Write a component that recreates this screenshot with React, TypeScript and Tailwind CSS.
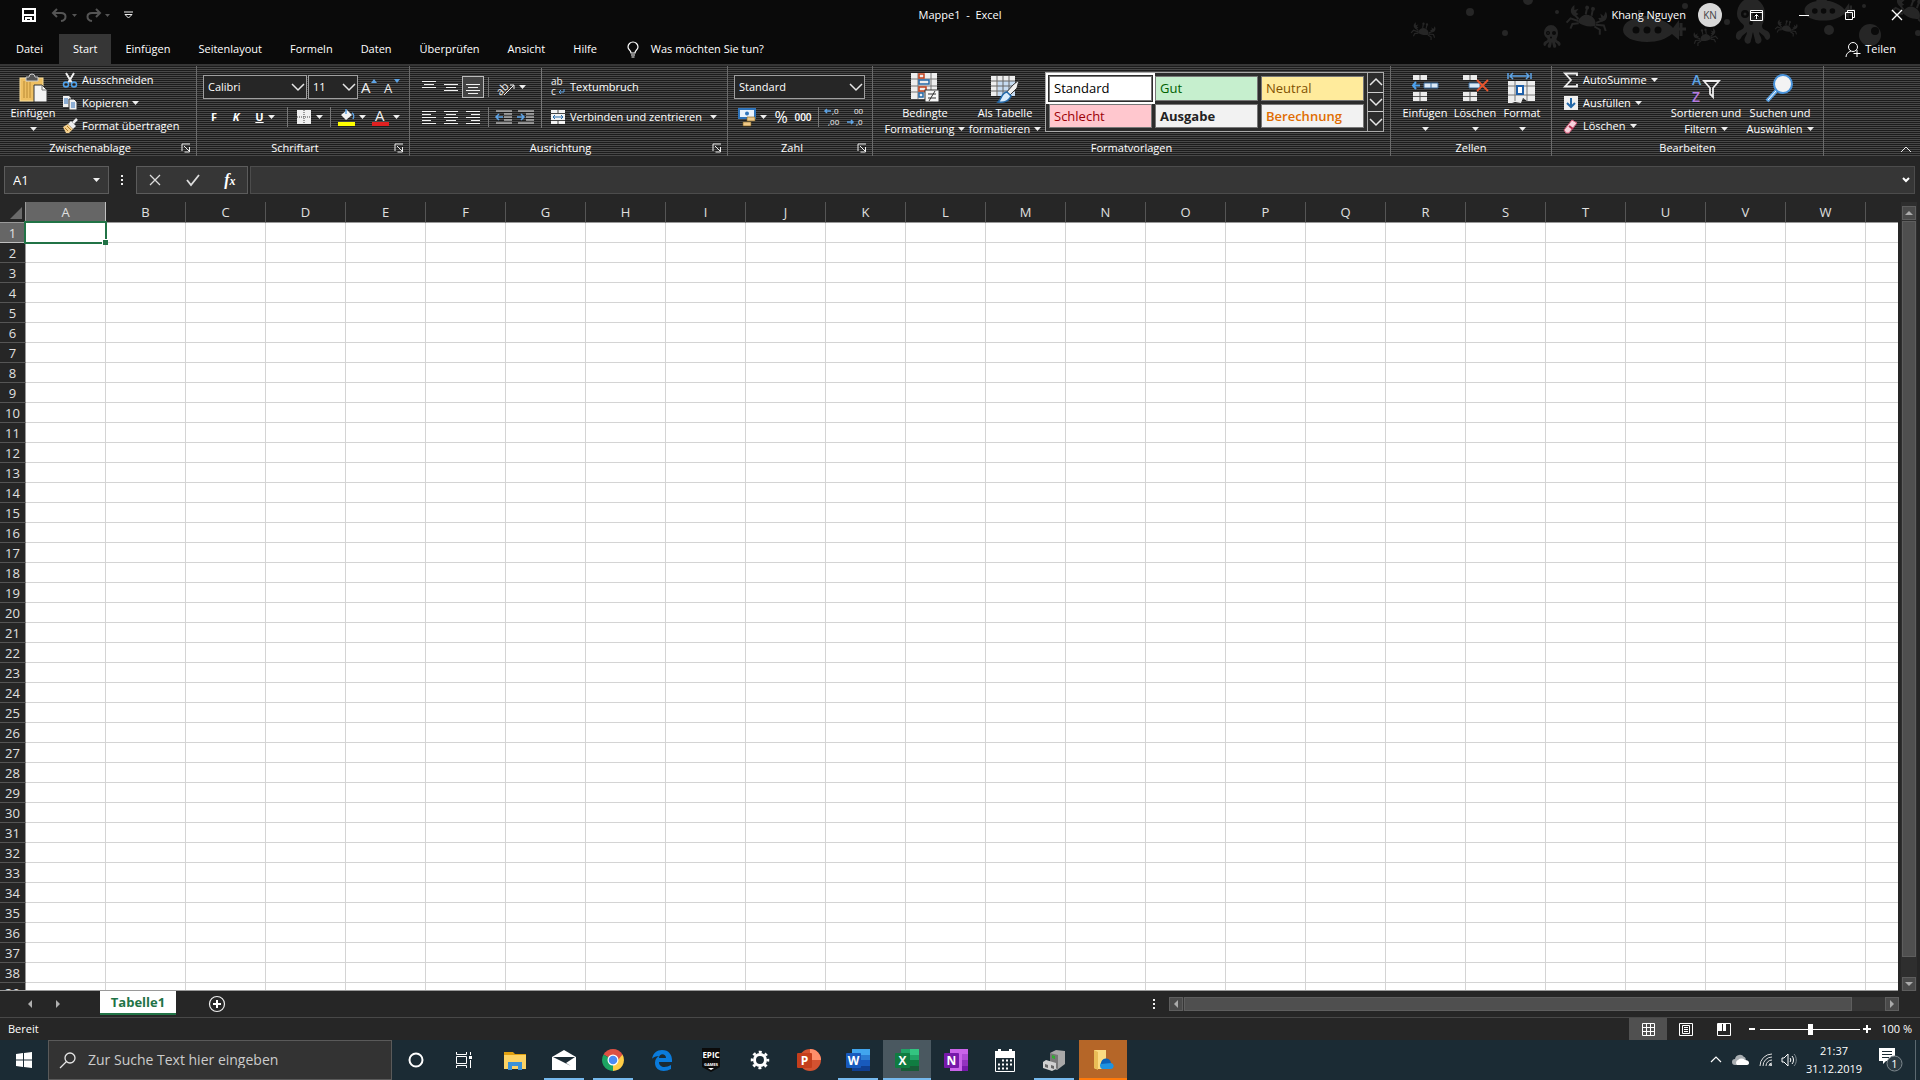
import type { ReactNode } from "react"
import { clsx } from "clsx"

const columns = [..."ABCDEFGHIJKLMNOPQRSTUVW".split(""), ""]
const rows = Array.from({ length: 39 }, (_, i) => i + 1)
const tabs = ["Datei", "Start", "Einfügen", "Seitenlayout", "Formeln", "Daten", "Überprüfen", "Ansicht", "Hilfe"]

const cellStyles = [
  { name: "Standard", className: "bg-white text-black outline-2 outline-offset-1 outline-white" },
  { name: "Gut", className: "bg-[#c6efce] text-[#006100]" },
  { name: "Neutral", className: "bg-[#ffeb9c] text-[#7f5000]" },
  { name: "Schlecht", className: "bg-[#ffc7ce] text-[#9c0006]" },
  { name: "Ausgabe", className: "bg-[#f2f2f2] text-[#222222] font-bold" },
  { name: "Berechnung", className: "bg-[#f2f2f2] text-[#e06c00] font-semibold" },
]

function Svg({ w = 16, h = 16, children }: { w?: number; h?: number; children: ReactNode }) {
  return (
    <svg width={w} height={h} viewBox={`0 0 ${w} ${h}`} fill="none" className="shrink-0 overflow-visible" aria-hidden="true">
      {children}
    </svg>
  )
}

function Caret() {
  return (
    <Svg w={7} h={4}>
      <path d="M0 0h7L3.500 4z" fill="#f0f0f0" />
    </Svg>
  )
}

function Chevron({ up }: { up?: boolean }) {
  return (
    <Svg w={16} h={10}>
      <path d={up ? "M2 8l6-6 6 6" : "M2 2l6 6 6-6"} stroke="#e6e6e6" strokeWidth="1.500" />
    </Svg>
  )
}

function Group({ label, launcher, className, children }: { label: string; launcher?: boolean; className?: string; children: ReactNode }) {
  return (
    <section className={clsx("flex shrink-0 flex-col border-r border-[#6a6a6a] pt-0.5", className)}>
      <div className="flex flex-1 items-start">{children}</div>
      <div className="flex h-4 items-center">
        <span className="flex-1 text-center">{label}</span>
        {launcher && (
          <button aria-label={`${label} – weitere Optionen`} className="mr-1">
            <Svg w={12} h={12}>
              <path d="M2 9V2h8M4 4l5 5M9.500 5v5h-5" stroke="#eee" />
            </Svg>
          </button>
        )}
      </div>
    </section>
  )
}

function LargeButton({ icon, lines, className }: { icon: ReactNode; lines: string[]; className?: string }) {
  return (
    <button className={clsx("flex shrink-0 flex-col items-center pt-1", className)}>
      <span className="flex h-8 items-center">{icon}</span>
      <span className="h-4 leading-[18px] whitespace-nowrap">{lines[0]}</span>
      <span className="flex h-[18px] items-center gap-1 whitespace-nowrap">
        {lines[1]}
        <Caret />
      </span>
    </button>
  )
}

function SmallButton({ icon, label, caret }: { icon: ReactNode; label: string; caret?: boolean }) {
  return (
    <button className="flex h-[23px] items-center gap-1 whitespace-nowrap">
      {icon}
      {label}
      {caret && <Caret />}
    </button>
  )
}

function Tool({ label, className, children }: { label: string; className?: string; children: ReactNode }) {
  return (
    <button aria-label={label} className={clsx("flex h-[22px] shrink-0 items-center justify-center gap-1", className ?? "w-[22px]")}>
      {children}
    </button>
  )
}

function Divider() {
  return <span className="mx-1 h-5 w-px shrink-0 bg-[#777777]" />
}

function Combo({ label, value, className }: { label: string; value: string; className: string }) {
  return (
    <div className={clsx("grid h-6 shrink-0 items-center border border-[#a0a0a0] bg-[#262626]", className)}>
      <select aria-label={label} className="col-start-1 row-start-1 w-full appearance-none px-1 text-[11px] outline-none">
        <option>{value}</option>
      </select>
      <span className="pointer-events-none col-start-1 row-start-1 justify-self-end">
        <Chevron />
      </span>
    </div>
  )
}

// horizontal strokes of a paragraph icon, one x/width pair per line
function Lines({ items }: { items: [number, number][] }) {
  return (
    <Svg>
      {items.map(([x, w], i) => (
        <rect key={i} x={x} y={2 + i * 3} width={w} height="1" fill="#f2f2f2" />
      ))}
    </Svg>
  )
}

function FontLetter({ arrow }: { arrow: "up" | "down" }) {
  return (
    <Svg w={20} h={20}>
      <text x="1" y="16" fontSize={arrow === "up" ? 15 : 13} fill="#f2f2f2">A</text>
      {arrow === "up" ? <path d="M11 6l3-4 3 4z" fill="#5ea4e6" /> : <path d="M11 2l3 4 3-4z" fill="#5ea4e6" />}
    </Svg>
  )
}

function Indent({ right }: { right?: boolean }) {
  return (
    <Svg w={18}>
      <path d="M1 2h16M9 5h8M9 8h8M9 11h8M1 14h16" stroke="#f2f2f2" />
      <path d={right ? "M0 8h6M4 5l3 3-3 3" : "M8 8H1M4 5L1 8l3 3"} stroke="#5ea4e6" strokeWidth="1.500" />
    </Svg>
  )
}

function Decimals({ more }: { more?: boolean }) {
  return (
    <Svg w={20} h={20}>
      <text x="8" y="7" fontSize="8" fill="#f2f2f2">{more ? ",0" : "00"}</text>
      <text x={more ? 4 : 10} y="18" fontSize="8" fill="#f2f2f2">{more ? ",00" : ",0"}</text>
      <path d={more ? "M7 4H1M3 2L1 4l2 2" : "M1 15h6M5 13l2 2-2 2"} stroke="#5ea4e6" strokeWidth="1.500" />
    </Svg>
  )
}

function CellRows({ kind }: { kind: "insert" | "delete" }) {
  return (
    <Svg w={28} h={30}>
      <path d="M2 2h14v5H2zM2 19h14v9H2z" fill="#ececec" />
      <path d="M9 2v5M9 19v9M2 23.500h14" stroke="#555" />
      {kind === "insert" ? (
        <>
          <path d="M13 10h14v5H13z" fill="#dceaf7" stroke="#3f6f9f" />
          <path d="M20 10v5" stroke="#3f6f9f" />
          <path d="M9 12.500H2M5 9l-3 3.500L5 16" stroke="#4ea3ef" strokeWidth="2" />
        </>
      ) : (
        <>
          <path d="M8 10h11v5H8z" fill="#dceaf7" stroke="#3f6f9f" />
          <path d="M16 7l11 11M27 7L16 18" stroke="#e8552d" strokeWidth="1.800" />
        </>
      )}
    </Svg>
  )
}

const icons = {
  paste: (
    <Svg w={30} h={30}>
      <rect x="2" y="5" width="23" height="23" fill="#eebf62" stroke="#f7dc98" />
      <path d="M6 8v17M9 9v16M12 9v16" stroke="#b98a34" />
      <path d="M8 8V4h3a3 3 0 016 0h3v4z" fill="#555" stroke="#ccc" />
      <path d="M16 12h8l5 5v12H16z" fill="#f4f4f4" stroke="#333" />
      <path d="M24 12v5h5" stroke="#777" />
    </Svg>
  ),
  cut: (
    <Svg>
      <path d="M4 1l6 10M12 1L6 11" stroke="#f0f0f0" strokeWidth="2" />
      <circle cx="4" cy="12.500" r="2.500" stroke="#4ea3ef" strokeWidth="1.500" />
      <circle cx="12" cy="12.500" r="2.500" stroke="#4ea3ef" strokeWidth="1.500" />
    </Svg>
  ),
  copy: (
    <Svg>
      <path d="M1 1h6l2 2v9H1z" fill="#f0f0f0" />
      <path d="M2 4h4M2 6h4M2 8h4" stroke="#2b6cb8" />
      <path d="M7 4h5l3 3v8H7z" fill="#f0f0f0" stroke="#333" />
      <path d="M9 8h4M9 10h4M9 12h4" stroke="#2b6cb8" />
    </Svg>
  ),
  brush: (
    <Svg>
      <path d="M1 9l5-3 5 5-4 4H4z" fill="#f3cf8e" />
      <path d="M6 6l3-3 5 5-3 3z" fill="#eee" />
      <path d="M11 5l4-4" stroke="#eee" strokeWidth="2.500" />
      <path d="M3 10l3 3M5 8l4 4" stroke="#b07b22" />
    </Svg>
  ),
  conditional: (
    <Svg w={30} h={32}>
      <rect x="1" y="1" width="26" height="26" fill="#eee" />
      <path d="M1 7h26M1 14h26M1 20h26M8 1v26M21 1v26" stroke="#777" />
      <rect x="9" y="2" width="5" height="4" stroke="#c4401c" strokeWidth="1.500" />
      <rect x="9" y="8" width="10" height="4" stroke="#2368a8" strokeWidth="1.500" />
      <rect x="9" y="15" width="7" height="4" stroke="#c4401c" strokeWidth="1.500" />
      <rect x="9" y="21" width="4" height="4" stroke="#2368a8" strokeWidth="1.500" />
      <rect x="15" y="18" width="14" height="12" fill="#f6f6f6" stroke="#333" />
      <path d="M18 22h8M18 26h8M25 19l-6 10" stroke="#333" />
    </Svg>
  ),
  table: (
    <Svg w={30} h={30}>
      <rect x="1" y="3" width="24" height="20" fill="#eee" />
      <path d="M8 8h17v15H8z" fill="#c7dcf2" />
      <path d="M1 8h24M1 13h24M1 18h24M7 3v20M13 3v20M19 3v20" stroke="#666" />
      <path d="M29 7l-2 8-9 9-3-3 8-9z" fill="#f2f2f2" stroke="#333" />
      <path d="M17 19l4 4c-2 5-7 7-13 6 4-3 3-9 9-10z" fill="#d8ebfb" stroke="#2368a8" strokeWidth="1.500" />
    </Svg>
  ),
  format: (
    <Svg w={30} h={32}>
      <path d="M1 1v6M24 1v6M3 4h19M6 1L3 4l3 3M19 1l3 3-3 3" stroke="#5ea4e6" strokeWidth="1.500" />
      <path d="M1 9h27v20h-8l-4-3-2 5-6-1-3 1H1z" fill="#eee" />
      <path d="M8 9v20M20 9v20M1 14h27M1 23h27" stroke="#777" />
      <rect x="10" y="14" width="6" height="8" fill="#fff" stroke="#1f5fa8" strokeWidth="2" />
    </Svg>
  ),
  sum: (
    <Svg>
      <path d="M14 4V1.500H2L8 8l-6 6.500h12V12" stroke="#f2f2f2" strokeWidth="1.800" />
    </Svg>
  ),
  fillDown: (
    <Svg>
      <rect x="1" y="1" width="14" height="14" fill="#f0f0f0" />
      <path d="M8 3v9M4 8l4 4 4-4" stroke="#2368a8" strokeWidth="2" />
    </Svg>
  ),
  eraser: (
    <Svg>
      <path d="M1 12L9 2l5 3-8 10H3z" fill="#f7d2dc" stroke="#d45a78" />
      <path d="M6 8l4 3" stroke="#b5304f" strokeWidth="2" />
    </Svg>
  ),
  sort: (
    <Svg w={30} h={32}>
      <text x="1" y="13" fontSize="14" fontWeight="600" fill="#5ea4e6">A</text>
      <text x="1" y="30" fontSize="14" fontWeight="600" fill="#b57be0">Z</text>
      <path d="M13 9h15l-6 7v9l-3-3v-6z" stroke="#ededed" strokeWidth="1.800" />
    </Svg>
  ),
  find: (
    <Svg w={30} h={30}>
      <path d="M12 17L2 28" stroke="#5ea4e6" strokeWidth="4" />
      <path d="M11 18L3 27" stroke="#fff" />
      <circle cx="18" cy="11" r="9" fill="#f3f3f3" stroke="#4a94dc" strokeWidth="2" />
    </Svg>
  ),
}

function SeaCreatures() {
  return (
    <svg className="absolute top-0 right-0" width="520" height="64" viewBox="1400 0 520 64" fill="#262626" aria-hidden="true">
      <defs>
        <g id="octopus">
          <path d="M-14 0a14 16 0 0128 0c0 7-3 10-3 12 0 5 7 3 8 9 1 4-3 7-5 3-1-3-4-4-6-6 0 4 4 6 2 10-2 3-6 2-6-2l-2-8c-1 3-1 5-2 8 0 4-4 5-6 2-2-4 2-6 2-10-2 2-5 3-6 6-2 4-6 1-5-3 1-6 8-4 8-9 0-2-7-5-7-12z" />
          <circle cx="-6" cy="0" r="4" fill="#0a0a0a" />
          <circle cx="6" cy="0" r="4" fill="#0a0a0a" />
          <circle cx="-6" cy="0" r="1.500" />
          <circle cx="0" cy="9" r="2" fill="#0a0a0a" />
        </g>
        <g id="crab">
          <path d="M-9 6a9 9 0 0118 0c-5 3-13 3-18 0zM-16-10c-4 4-3 10 3 11l3-3-3-1 2-4-4 2zM16-10c4 4 3 10-3 11l-3-3 3-1-2-4 4 2z" />
          <path d="M-9 3l-6-4M9 3l6-4M-9 5l-8-1-3 5M-8 7l-6 2-1 5M9 5l8-1 3 5M8 7l6 2 1 5M-3-3v-6M3-3v-6" stroke="#262626" strokeWidth="2" fill="none" />
          <circle cx="-3" cy="-10" r="2" />
          <circle cx="3" cy="-10" r="2" />
        </g>
        <g id="submarine">
          <path d="M-27 0c0-8 10-13 24-13 12 0 22 6 26 11l6-8v20l-7-6C16 9 8 12-3 12c-14 0-24-5-24-12zM-12-12v-8h3v6h10v3z" />
          <path d="M26-1h10M31-7v13" stroke="#262626" strokeWidth="3" />
          <circle cx="-14" cy="0" r="3.500" fill="#0a0a0a" />
          <circle cx="-3" cy="0" r="3.500" fill="#0a0a0a" />
          <circle cx="8" cy="0" r="3.500" fill="#0a0a0a" />
        </g>
      </defs>
      <use href="#crab" transform="translate(1424 30) rotate(12) scale(.6)" />
      <use href="#octopus" transform="translate(1551 33) scale(.5)" />
      <use href="#crab" transform="translate(1588 18) rotate(12)" />
      <use href="#submarine" transform="translate(1650 30)" />
      <use href="#crab" transform="translate(1705 36) rotate(-12) scale(.6)" />
      <use href="#octopus" transform="translate(1751 14)" />
      <use href="#crab" transform="translate(1787 27) rotate(14) scale(.55)" />
      <use href="#submarine" transform="translate(1826 11) scale(.8)" />
      <use href="#crab" transform="translate(1913 10) rotate(20)" />
      <circle cx="1470" cy="12" r="4" />
      <circle cx="1528" cy="0" r="5" />
      <circle cx="1505" cy="33" r="3" />
      <circle cx="1557" cy="12" r="2" />
      <circle cx="1685" cy="6" r="3" />
      <circle cx="1727" cy="22" r="3" />
      <circle cx="1829" cy="30" r="5" />
      <circle cx="1864" cy="6" r="2" />
      <circle cx="1870" cy="35" r="11" />
      <circle cx="1875" cy="31" r="4" fill="#0a0a0a" />
      <circle cx="1918" cy="33" r="3" />
    </svg>
  )
}

function TitleBar() {
  return (
    <header className="relative bg-[#0a0a0a]">
      <SeaCreatures />
      <div className="relative grid h-[34px] grid-cols-[1fr_auto_1fr] items-center pb-1">
        <div className="flex items-center pl-[22px]">
          <button aria-label="Speichern">
            <Svg w={14} h={14}>
              <path d="M1 1h12v12H1zM2 7h10M4 13v-3h5v3" stroke="#fff" strokeWidth="2" />
            </Svg>
          </button>
          <button aria-label="Rückgängig" className="ml-4 flex items-center gap-1 text-[#555555]">
            <Svg w={16} h={14}>
              <path d="M5 1L1 5l4 4M1 5h8c6 0 6 7 0 8" stroke="currentColor" strokeWidth="2" />
            </Svg>
            <Svg w={5} h={3}>
              <path d="M0 0h5L2.500 3z" fill="currentColor" />
            </Svg>
          </button>
          <button aria-label="Wiederholen" className="ml-2 flex items-center gap-1 text-[#555555]">
            <Svg w={16} h={14}>
              <path d="M11 1l4 4-4 4M15 5H7c-6 0-6 7 0 8" stroke="currentColor" strokeWidth="2" />
            </Svg>
            <Svg w={5} h={3}>
              <path d="M0 0h5L2.500 3z" fill="currentColor" />
            </Svg>
          </button>
          <button aria-label="Symbolleiste anpassen" className="ml-3.5">
            <Svg w={9} h={8}>
              <path d="M0 1h9M1 3.500h7L4.500 7z" stroke="#eee" />
            </Svg>
          </button>
        </div>
        <span className="whitespace-pre">Mappe1  -  Excel</span>
        <div className="flex items-center justify-end pr-[17px]">
          <span className="mr-3">Khang Nguyen</span>
          <span className="flex size-6 items-center justify-center rounded-full bg-[#d8d8d8] text-[10px] text-[#444444]">KN</span>
          <button aria-label="Menüband-Anzeigeoptionen" className="ml-7">
            <Svg w={13} h={11}>
              <path d="M.5.5h12v10H.5zM.5 2.500h12M6.500 9V4.500M4.500 6.500l2-2 2 2" stroke="#fff" />
            </Svg>
          </button>
          <button aria-label="Minimieren" className="ml-9">
            <Svg w={10} h={10}>
              <path d="M0 5.500h10" stroke="#fff" />
            </Svg>
          </button>
          <button aria-label="Verkleinern" className="ml-9">
            <Svg w={10} h={10}>
              <path d="M.5 2.500h7v7h-7zM2.500 2V.5h7v7H8" stroke="#fff" />
            </Svg>
          </button>
          <button aria-label="Schließen" className="ml-9">
            <Svg w={12} h={12}>
              <path d="M1 1l10 10M11 1L1 11" stroke="#fff" strokeWidth="1.300" />
            </Svg>
          </button>
        </div>
      </div>
      <nav className="relative flex h-[30px] items-stretch pl-0.5">
        {tabs.map((tab) => (
          <button key={tab} className={clsx("px-[14px]", tab === "Start" && "bg-[#363636]", tab === "Datei" && "mr-0.5")}>
            {tab}
          </button>
        ))}
        <button className="ml-4 flex items-center gap-3">
          <Svg w={12} h={17}>
            <path d="M4 12c0-3-3-3-3-6a5 5 0 0110 0c0 3-3 3-3 6zM4 14h4M4.500 16h3" stroke="#fff" strokeWidth="1.200" />
          </Svg>
          Was möchten Sie tun?
        </button>
        <button className="mr-6 ml-auto flex items-center gap-1">
          <Svg w={16} h={17}>
            <circle cx="8" cy="6" r="4.500" stroke="#fff" />
            <path d="M1 16c0-3 2-5 5-6M12 9v7M8.500 12.500h7" stroke="#fff" />
          </Svg>
          Teilen
        </button>
      </nav>
    </header>
  )
}

function Ribbon() {
  return (
    <div className="flex h-[92px] border-t-2 border-[#363636] bg-[repeating-linear-gradient(to_bottom,#1c1c1c_0px,#1c1c1c_1px,#484848_1px,#484848_2px)]">
      <Group label="Zwischenablage" launcher className="w-[197px]">
        <LargeButton icon={icons.paste} lines={["Einfügen", ""]} className="ml-1 w-[58px]" />
        <div className="flex flex-col items-start">
          <SmallButton icon={icons.cut} label="Ausschneiden" />
          <SmallButton icon={icons.copy} label="Kopieren" caret />
          <SmallButton icon={icons.brush} label="Format übertragen" />
        </div>
      </Group>

      <Group label="Schriftart" launcher className="w-[213px]">
        <div className="flex flex-col gap-2 pt-2 pl-1.5">
          <div className="flex h-[22px] items-center gap-px">
            <Combo label="Schriftart" value="Calibri" className="w-[104px]" />
            <Combo label="Schriftgrad" value="11" className="w-[50px]" />
            <Tool label="Schriftgrad vergrößern"><FontLetter arrow="up" /></Tool>
            <Tool label="Schriftgrad verkleinern"><FontLetter arrow="down" /></Tool>
          </div>
          <div className="flex items-center">
            <Tool label="Fett"><b>F</b></Tool>
            <Tool label="Kursiv"><b className="italic">K</b></Tool>
            <Tool label="Unterstrichen" className="w-9"><b className="underline">U</b><Caret /></Tool>
            <Divider />
            <Tool label="Rahmen" className="w-[34px]">
              <Svg>
                <rect x="1" y="1" width="14" height="14" fill="#f0f0f0" />
                <path d="M8 1v14M1 8h14" stroke="#444" strokeDasharray="1 1" />
              </Svg>
              <Caret />
            </Tool>
            <Divider />
            <Tool label="Füllfarbe" className="w-[34px]">
              <Svg w={17} h={18}>
                <path d="M3 7l6-5 5 5-6 5z" fill="#f2f2f2" />
                <path d="M8 1v5M14 5c2 1 2 4 1 6" stroke="#5ea4e6" strokeWidth="1.500" />
                <rect y="14" width="17" height="4" fill="#ffff00" />
              </Svg>
              <Caret />
            </Tool>
            <Tool label="Schriftfarbe" className="w-[34px]">
              <Svg w={17} h={18}>
                <text x="3" y="13" fontSize="15" fill="#f2f2f2">A</text>
                <rect y="14" width="17" height="4" fill="#e02020" />
              </Svg>
              <Caret />
            </Tool>
          </div>
        </div>
      </Group>

      <Group label="Ausrichtung" launcher className="w-[318px]">
        <div className="flex flex-col gap-2 pt-2 pl-2">
          <div className="flex items-center">
            <Tool label="Oben ausrichten"><Lines items={[[1, 14], [3, 10], [1, 14]]} /></Tool>
            <Tool label="Zentriert ausrichten"><Lines items={[[0, 0], [1, 14], [3, 10], [1, 14]]} /></Tool>
            <Tool label="Unten ausrichten" className="w-[22px] border border-[#bbbbbb] bg-[#444444]">
              <Lines items={[[0, 0], [1, 14], [3, 10], [1, 14], [3, 10]]} />
            </Tool>
            <Divider />
            <Tool label="Orientierung" className="w-9">
              <Svg w={18} h={18}>
                <text x="-2" y="13" fontSize="11" fill="#f2f2f2" transform="rotate(-45 7 9)">ab</text>
                <path d="M7 17L17 7M13 7h4v4" stroke="#f2f2f2" />
              </Svg>
              <Caret />
            </Tool>
          </div>
          <div className="flex items-center">
            <Tool label="Linksbündig"><Lines items={[[1, 14], [1, 9], [1, 14], [1, 9], [1, 14]]} /></Tool>
            <Tool label="Zentriert"><Lines items={[[1, 14], [3, 10], [1, 14], [3, 10], [1, 14]]} /></Tool>
            <Tool label="Rechtsbündig"><Lines items={[[1, 14], [6, 9], [1, 14], [6, 9], [1, 14]]} /></Tool>
            <Divider />
            <Tool label="Einzug verkleinern"><Indent /></Tool>
            <Tool label="Einzug vergrößern"><Indent right /></Tool>
          </div>
        </div>
        <div className="ml-1 flex flex-col gap-2 border-l border-[#777777] pt-2 pl-2">
          <button className="flex h-[22px] items-center gap-1">
            <Svg w={16} h={20}>
              <text x="1" y="8" fontSize="10" fill="#f2f2f2">ab</text>
              <text x="1" y="18" fontSize="10" fill="#f2f2f2">c</text>
              <path d="M14 12v3H9M11 13l-2 2 2 2" stroke="#5ea4e6" />
            </Svg>
            Textumbruch
          </button>
          <button className="flex h-[22px] items-center gap-1 whitespace-nowrap">
            <Svg>
              <rect x="1" y="1" width="14" height="14" fill="#f2f2f2" />
              <path d="M1 4.500h14M1 11.500h14M8 1v3M8 12v3" stroke="#444" />
              <path d="M3 8h10M5 6L3 8l2 2M11 6l2 2-2 2" stroke="#2368a8" />
            </Svg>
            Verbinden und zentrieren
            <span className="ml-1"><Caret /></span>
          </button>
        </div>
      </Group>

      <Group label="Zahl" launcher className="w-[145px]">
        <div className="flex flex-col gap-2 pt-2 pl-1.5">
          <div className="flex h-[22px] items-center">
            <Combo label="Zahlenformat" value="Standard" className="w-[131px]" />
          </div>
          <div className="flex items-center">
            <Tool label="Buchhaltungsformat" className="w-9">
              <Svg w={18} h={18}>
                <rect x="1" y="1" width="16" height="9" fill="#e8f2fc" stroke="#2f74bb" strokeWidth="2" />
                <circle cx="9" cy="5.500" r="2" fill="#2f74bb" />
                <path d="M9 9h8v4H9zM5 14h8v4H5z" fill="#f0c987" stroke="#7a5a20" strokeWidth=".6" />
              </Svg>
              <Caret />
            </Tool>
            <Tool label="Prozentformat"><span className="text-base">%</span></Tool>
            <Tool label="Tausendertrennzeichen"><span className="text-[10px] font-semibold">000</span></Tool>
            <Divider />
            <Tool label="Dezimalstelle hinzufügen"><Decimals more /></Tool>
            <Tool label="Dezimalstelle löschen"><Decimals /></Tool>
          </div>
        </div>
      </Group>

      <Group label="Formatvorlagen" className="w-[518px]">
        <LargeButton icon={icons.conditional} lines={["Bedingte", "Formatierung"]} className="ml-3 w-20" />
        <LargeButton icon={icons.table} lines={["Als Tabelle", "formatieren"]} className="w-20" />
        <div className="mt-1 flex h-[60px] border border-[#aaaaaa] bg-[#2c2c2c]">
          <div className="grid grid-cols-3 gap-[3px] p-[3px]">
            {cellStyles.map((style) => (
              <button key={style.name} className={clsx("w-[103px] border border-[#777777] px-1 text-left text-[13px]", style.className)}>
                {style.name}
              </button>
            ))}
          </div>
          <div className="flex w-4 flex-col divide-y divide-[#cccccc] border-l border-[#aaaaaa]">
            <button aria-label="Vorherige Zeile" className="flex-1"><Chevron up /></button>
            <button aria-label="Nächste Zeile" className="flex-1"><Chevron /></button>
            <button aria-label="Weitere Formatvorlagen" className="flex-1"><Chevron /></button>
          </div>
        </div>
      </Group>

      <Group label="Zellen" className="w-[161px]">
        <LargeButton icon={<CellRows kind="insert" />} lines={["Einfügen", ""]} className="ml-[9px] w-[50px]" />
        <LargeButton icon={<CellRows kind="delete" />} lines={["Löschen", ""]} className="w-[50px]" />
        <LargeButton icon={icons.format} lines={["Format", ""]} className="w-11" />
      </Group>

      <Group label="Bearbeiten" className="w-[272px]">
        <div className="flex w-[116px] flex-col items-start pl-[11px]">
          <SmallButton icon={icons.sum} label="AutoSumme" caret />
          <SmallButton icon={icons.fillDown} label="Ausfüllen" caret />
          <SmallButton icon={icons.eraser} label="Löschen" caret />
        </div>
        <LargeButton icon={icons.sort} lines={["Sortieren und", "Filtern"]} className="w-[76px]" />
        <LargeButton icon={icons.find} lines={["Suchen und", "Auswählen"]} className="w-[72px]" />
      </Group>

      <button aria-label="Menüband reduzieren" className="mt-auto mr-2 ml-auto">
        <Svg w={12} h={12}>
          <path d="M1 8l5-5 5 5" stroke="#eee" />
        </Svg>
      </button>
    </div>
  )
}

function FormulaBar() {
  return (
    <div className="flex h-[46px] shrink-0 items-center bg-[#262626] pt-0.5 pr-[5px] pl-1">
      <div className="flex h-7 w-[105px] items-center border border-[#5c5c5c] bg-[#363636] pr-2 pl-2">
        <input aria-label="Namenfeld" defaultValue="A1" className="w-0 flex-1 text-[13px] outline-none" />
        <Caret />
      </div>
      <Svg w={27} h={16}>
        <path d="M12 3h2v2h-2zM12 7h2v2h-2zM12 11h2v2h-2z" fill="#eee" />
      </Svg>
      <div className="flex h-7 w-[112px] items-center justify-around border border-[#5c5c5c] bg-[#363636]">
        <button aria-label="Abbrechen">
          <Svg w={14} h={14}>
            <path d="M2 2l10 10M12 2L2 12" stroke="#ddd" strokeWidth="1.300" />
          </Svg>
        </button>
        <button aria-label="Eingeben">
          <Svg w={16} h={14}>
            <path d="M2 7l4 5L14 2" stroke="#ddd" strokeWidth="1.800" />
          </Svg>
        </button>
        <button aria-label="Funktion einfügen" className="font-['Liberation_Serif',serif] text-base font-bold italic">
          f<span className="text-xs">x</span>
        </button>
      </div>
      <div className="ml-0.5 flex h-7 flex-1 items-center border border-[#4c4c4c] bg-[#363636] pr-1">
        <input aria-label="Bearbeitungsleiste" className="flex-1 px-2 text-[13px] outline-none" />
        <button aria-label="Bearbeitungsleiste erweitern">
          <Svg w={8} h={6}>
            <path d="M1 1l3 3 3-3" stroke="#fff" strokeWidth="2" />
          </Svg>
        </button>
      </div>
    </div>
  )
}

function ScrollArrow({ label, d }: { label: string; d: string }) {
  return (
    <button aria-label={label} className="flex size-[14px] shrink-0 items-center justify-center border border-[#5e5e5e] bg-[#4a4a4a]">
      <Svg w={8} h={8}>
        <path d={d} fill="#ababab" />
      </Svg>
    </button>
  )
}

function Sheet() {
  return (
    <div className="flex min-h-0 flex-1 bg-[#262626]">
      <div className="min-w-0 flex-1 overflow-hidden border-b border-[#9a9a9a]">
        <table className="border-separate border-spacing-0 bg-white text-[13px] leading-none">
          <thead>
            <tr className="h-[21px] bg-[#262626] text-[#e0e0e0]">
              <th className="h-[21px] min-w-[26px] border-r border-b border-[#9a9a9a] p-0">
                <Svg w={24} h={20}>
                  <path d="M22 5v12H10z" fill="#6a6a6a" />
                </Svg>
              </th>
              {columns.map((col) => (
                <th
                  key={col}
                  scope="col"
                  className={clsx(
                    "min-w-20 border-r border-b p-0 font-normal",
                    col === "A" ? "border-[#c0c0c0] bg-[#666666]" : "border-[#9a9a9a] border-r-[#555555]"
                  )}
                >
                  {col}
                </th>
              ))}
            </tr>
          </thead>
          <tbody>
            {rows.map((row) => (
              <tr key={row} className="h-5">
                <th
                  scope="row"
                  className={clsx(
                    "h-5 border-r border-b p-0 pt-0.5 font-normal text-[#e0e0e0]",
                    row === 1 ? "border-[#c0c0c0] bg-[#666666]" : "border-[#555555] border-r-[#9a9a9a] bg-[#262626]"
                  )}
                >
                  {row}
                </th>
                {columns.map((col) => (
                  <td key={col} className="relative border-r border-b border-[#d4d4d4] p-0">
                    {row === 1 && col === "A" && (
                      <>
                        <span className="absolute -inset-0.5 border-2 border-[#217346]" />
                        <span className="absolute -right-[3px] -bottom-[3px] z-10 size-[6px] border-t border-l border-white bg-[#217346]" />
                      </>
                    )}
                  </td>
                ))}
              </tr>
            ))}
          </tbody>
        </table>
      </div>
      <div className="mx-[3px] flex w-4 flex-col items-center gap-px bg-[#2e2e2e] pt-1">
        <ScrollArrow label="Nach oben" d="M0 6h8L4 2z" />
        <div className="w-[14px] flex-1 border border-[#5e5e5e] bg-[#4f4f4f]" />
        <div className="h-[18px]" />
        <ScrollArrow label="Nach unten" d="M0 2h8L4 6z" />
      </div>
    </div>
  )
}

function SheetTabs() {
  return (
    <div className="flex h-[27px] shrink-0 items-start border-b border-[#484848] bg-[#262626] pr-[21px]">
      <div className="flex h-[26px] w-[100px] items-center gap-5 pl-[26px]">
        <button aria-label="Vorheriges Blatt">
          <Svg w={8} h={8}><path d="M6 0v8L2 4z" fill="#b0b0b0" /></Svg>
        </button>
        <button aria-label="Nächstes Blatt">
          <Svg w={8} h={8}><path d="M2 0v8l4-4z" fill="#b0b0b0" /></Svg>
        </button>
      </div>
      <button className="h-6 w-[76px] border-b-2 border-[#217346] bg-white text-[13px] font-bold text-[#217346]">Tabelle1</button>
      <button aria-label="Neues Blatt" className="mt-1 ml-8">
        <Svg w={18} h={18}>
          <circle cx="9" cy="9" r="7.500" stroke="#eee" strokeWidth="1.200" />
          <path d="M9 5v8M5 9h8" stroke="#fff" strokeWidth="2" />
        </Svg>
      </button>
      <div className="ml-auto flex w-[746px] items-center pt-1.5">
        <Svg w={16} h={12}>
          <path d="M0 1h2v2H0zM0 5h2v2H0zM0 9h2v2H0z" fill="#eee" />
        </Svg>
        <div className="flex flex-1 items-center gap-px bg-[#363636]">
          <ScrollArrow label="Nach links" d="M6 0v8L2 4z" />
          <div className="h-[14px] w-[668px] border border-[#5e5e5e] bg-[#4f4f4f]" />
          <span className="flex-1" />
          <ScrollArrow label="Nach rechts" d="M2 0v8l4-4z" />
        </div>
      </div>
    </div>
  )
}

function StatusBar() {
  return (
    <div className="flex h-[22px] shrink-0 items-center bg-[#262626] px-2">
      <span>Bereit</span>
      <button aria-label="Normal" className="ml-auto flex h-full w-[38px] items-center justify-center bg-[#505050]">
        <Svg w={13} h={13}>
          <path d="M.5.5h12v12H.5zM4.500 0v13M8.500 0v13M0 4.500h13M0 8.500h13" stroke="#fff" />
        </Svg>
      </button>
      <button aria-label="Seitenlayout" className="flex w-[38px] justify-center">
        <Svg w={14} h={13}>
          <path d="M.5.5h13v12H.5zM3.500 2.500h7v8h-7zM5 4.500h4M5 6.500h4M5 8.500h4" stroke="#fff" />
        </Svg>
      </button>
      <button aria-label="Umbruchvorschau" className="flex w-[38px] justify-center">
        <Svg w={14} h={13}>
          <path d="M.5.5h13v12H.5z" stroke="#fff" />
          <path d="M1 1h4v7H1zM6 1h3v7H6z" fill="#fff" />
        </Svg>
      </button>
      <button aria-label="Verkleinern" className="ml-1 flex w-[10px] justify-center">
        <Svg w={6} h={6}><path d="M0 3h6" stroke="#fff" strokeWidth="2" /></Svg>
      </button>
      <input
        type="range"
        aria-label="Zoom"
        min={10}
        max={190}
        defaultValue={100}
        className="mx-[3px] h-3 w-[100px] appearance-none bg-[linear-gradient(#fff,#fff)] bg-[size:100%_1px] bg-center bg-no-repeat [&::-webkit-slider-thumb]:h-[11px] [&::-webkit-slider-thumb]:w-[5px] [&::-webkit-slider-thumb]:appearance-none [&::-webkit-slider-thumb]:bg-white"
      />
      <button aria-label="Vergrößern">
        <Svg w={8} h={8}><path d="M0 4h8M4 0v8" stroke="#fff" strokeWidth="2" /></Svg>
      </button>
      <span className="ml-2.5 whitespace-nowrap">100 %</span>
    </div>
  )
}

function OfficeIcon({ letter, dark, children }: { letter: string; dark: string; children: ReactNode }) {
  return (
    <Svg w={24} h={22}>
      {children}
      <rect x="0" y="4" width="15" height="15" rx="1" fill={dark} />
      <text x="7.500" y="16" fontSize="12" fontWeight="700" textAnchor="middle" fill="#fff">{letter}</text>
    </Svg>
  )
}

const apps: { name: string; state?: "open" | "active" | "alert"; icon: ReactNode }[] = [
  {
    name: "Explorer",
    icon: (
      <Svg w={22} h={19}>
        <path d="M0 1h9l2 2h11v15H0z" fill="#e0a010" />
        <path d="M0 4h22v14H0z" fill="#fcd364" />
        <path d="M4 11h14v8h-4v-4H8v4H4z" fill="#3a91d8" />
      </Svg>
    ),
  },
  {
    name: "Mail",
    state: "open",
    icon: (
      <Svg w={24} h={20}>
        <path d="M0 7l12-7 12 7v13H0z" fill="#fff" />
        <path d="M1 7h22l-9 6 5 3-18-9z" fill="#1b2b34" />
      </Svg>
    ),
  },
  {
    name: "Chrome",
    state: "open",
    icon: (
      <Svg w={24} h={24}>
        <path d="M12 12L2.500 6.500A11 11 0 0121.500 6.500z" fill="#dd5144" />
        <path d="M12 12L2.500 6.500A11 11 0 0012 23z" fill="#1da462" />
        <path d="M12 12h0L21.500 6.500A11 11 0 0112 23z" fill="#ffcd46" />
        <path d="M12 6.500h9.500L17 12z" fill="#dd5144" />
        <circle cx="12" cy="12" r="5.500" fill="#fff" />
        <circle cx="12" cy="12" r="4.300" fill="#4c8bf5" />
      </Svg>
    ),
  },
  {
    name: "Edge",
    icon: (
      <Svg w={22} h={22}>
        <path d="M1 10C2 4 6 1 11 1c7 0 10 5 10 10v2H8c0 6 7 6 12 3v4c-7 4-16 2-16-6 0-4 2-6 4-7-5 0-7 3-7 3zM8 9h7c0-5-7-5-7 0z" fill="#0a7bdc" fillRule="evenodd" />
      </Svg>
    ),
  },
  {
    name: "Epic Games",
    icon: (
      <Svg w={20} h={24}>
        <path d="M1 0h18v19l-9 5-9-5z" fill="#0b0b0b" />
        <text x="10" y="10" fontSize="8" fontWeight="700" textAnchor="middle" fill="#fff">EPIC</text>
        <text x="10" y="18" fontSize="4" fontWeight="700" textAnchor="middle" fill="#fff">GAMES</text>
        <path d="M7 20h6l-3 2z" fill="#fff" />
      </Svg>
    ),
  },
  {
    name: "Einstellungen",
    icon: (
      <Svg w={20} h={20}>
        <circle cx="10" cy="10" r="5.500" stroke="#fff" strokeWidth="3" />
        <circle cx="10" cy="10" r="8" stroke="#fff" strokeWidth="2.500" strokeDasharray="3 3.283" strokeDashoffset="1.500" />
      </Svg>
    ),
  },
  {
    name: "PowerPoint",
    icon: (
      <OfficeIcon letter="P" dark="#c43e1c">
        <circle cx="13" cy="11" r="11" fill="#d35230" />
        <path d="M13 0a11 11 0 0111 11H13z" fill="#ff8f6b" />
      </OfficeIcon>
    ),
  },
  {
    name: "Word",
    state: "open",
    icon: (
      <OfficeIcon letter="W" dark="#185abd">
        <path d="M6 0h18v6H6z" fill="#41a5ee" />
        <path d="M6 6h18v5H6z" fill="#2b7cd3" />
        <path d="M6 11h18v6H6z" fill="#185abd" />
        <path d="M6 17h18v5H6z" fill="#103f91" />
      </OfficeIcon>
    ),
  },
  {
    name: "Excel",
    state: "active",
    icon: (
      <OfficeIcon letter="X" dark="#107c41">
        <path d="M6 0h9v6H6z" fill="#21a366" />
        <path d="M15 0h9v6h-9z" fill="#33c481" />
        <path d="M6 6h9v11H6z" fill="#107c41" />
        <path d="M15 6h9v5h-9z" fill="#21a366" />
        <path d="M15 11h9v6h-9z" fill="#107c41" />
        <path d="M6 17h18v5H6z" fill="#185c37" />
      </OfficeIcon>
    ),
  },
  {
    name: "OneNote",
    icon: (
      <OfficeIcon letter="N" dark="#7719aa">
        <path d="M6 0h18v22H6z" fill="#ca64ea" />
        <path d="M18 5h6v6h-6z" fill="#ae4bd5" />
        <path d="M18 11h6v6h-6z" fill="#9332bf" />
        <path d="M18 17h6v5h-6z" fill="#7719aa" />
      </OfficeIcon>
    ),
  },
  {
    name: "Kalender",
    icon: (
      <Svg w={20} h={23}>
        <path d="M0 2h3V0h3v2h8V0h3v2h3v7H0z" fill="#fff" />
        <path d="M.5 8v14.500h19V8" stroke="#fff" />
        <path d="M7 11.500h11M3 15.500h14M3 19.500h10" stroke="#fff" strokeWidth="2" strokeDasharray="2 2" />
      </Svg>
    ),
  },
  {
    name: "Geräte",
    state: "open",
    icon: (
      <Svg w={22} h={22}>
        <path d="M7 4l6-3 9 1v13l-8 6-7-3z" fill="#a8a8a8" />
        <path d="M7 4l8 2v14l-8-3z" fill="#777" />
        <path d="M9 6l3 1v3L9 9z" fill="#2fae2f" />
        <path d="M0 13l3-2 10 3v6l-4 2-9-3z" fill="#d0d0d0" />
        <path d="M2 15l3 1v3l-3-1zM8 16l3 1v3l-3-1z" fill="#666" />
      </Svg>
    ),
  },
  {
    name: "OneDrive",
    state: "alert",
    icon: (
      <Svg w={22} h={22}>
        <path d="M2 1h12v19H4l-2-1z" fill="#fbdc83" />
        <path d="M2 1l4 2v18l-4-2z" fill="#e9bd57" />
        <path d="M10 20a4 4 0 010-7 5 5 0 019 1c4 1 3 6 0 6z" fill="#1f93e0" />
        <path d="M9 15a5 5 0 0110-1z" fill="#0b62b8" />
      </Svg>
    ),
  },
]

function Taskbar() {
  return (
    <footer className="flex h-10 shrink-0 items-stretch bg-[#1b2b34]">
      <button aria-label="Start" className="flex w-12 items-center justify-center">
        <Svg>
          <path d="M0 2l7-1v6.500H0zM8 1l8-1v7.500H8zM0 8.500h7V15l-7-1zM8 8.500h8V16l-8-1z" fill="#fff" />
        </Svg>
      </button>
      <div className="flex w-[344px] items-center gap-3 border border-[#5a5a5a] bg-[#333333] pl-[11px]">
        <Svg w={16} h={16}>
          <circle cx="10" cy="6" r="5" stroke="#e6e6e6" strokeWidth="1.300" />
          <path d="M6.500 9.500L0 16" stroke="#e6e6e6" strokeWidth="1.300" />
        </Svg>
        <input
          aria-label="Suche"
          placeholder="Zur Suche Text hier eingeben"
          className="flex-1 text-[14px] outline-none placeholder:text-[#cccccc]"
        />
      </div>
      <button aria-label="Cortana" className="flex w-12 items-center justify-center">
        <Svg><circle cx="8" cy="8" r="6.500" stroke="#fff" strokeWidth="2" /></Svg>
      </button>
      <button aria-label="Aktive Anwendungen" className="mr-1 flex w-[47px] items-center justify-center">
        <Svg>
          <path d="M.5 0v2.500h10V0M.5 16v-2.500h10V16M.5 4.500h10v7H.5zM14.500 0v3M14.500 8v8" stroke="#fff" />
          <path d="M13 4h3v3h-3z" fill="#fff" />
        </Svg>
      </button>
      <div className="flex gap-px">
        {apps.map((app) => (
          <button
            key={app.name}
            aria-label={app.name}
            className={clsx(
              "relative flex w-12 items-center justify-center",
              app.state === "active" && "bg-[#4a5860]",
              app.state === "alert" && "bg-[#b56628]"
            )}
          >
            {app.icon}
            {app.state && (
              <span
                className={clsx(
                  "absolute bottom-0 h-0.5",
                  app.state === "open" && "inset-x-1 bg-[#76b9ed]",
                  app.state === "active" && "inset-x-0 bg-[#76b9ed]",
                  app.state === "alert" && "inset-x-0 bg-[#ff7a0a]"
                )}
              />
            )}
          </button>
        ))}
      </div>
      <div className="ml-auto flex items-center">
        <button aria-label="Ausgeblendete Symbole" className="mr-2.5">
          <Svg w={12} h={12}><path d="M1 8l5-5 5 5" stroke="#fff" strokeWidth="1.200" /></Svg>
        </button>
        <button aria-label="Cloudspeicher" className="mr-2.5">
          <Svg w={17} h={12}>
            <path d="M3 11a3 3 0 010-6 5 5 0 019-2c3 0 2 8 0 8z" fill="#a9aeb2" />
            <path d="M5 11a3 3 0 011-5 5 5 0 017 0c5 0 5 5 2 5z" fill="#fff" />
          </Svg>
        </button>
        <button aria-label="Netzwerk" className="mr-2">
          <Svg w={14} h={14}>
            <path d="M1 13A12 12 0 0113 1M4 13a9 9 0 019-9M7 13a6 6 0 016-6M10 13a3 3 0 013-3" stroke="#ddd" />
            <circle cx="12" cy="12" r="1" fill="#fff" />
          </Svg>
        </button>
        <button aria-label="Lautstärke">
          <Svg w={18} h={14}>
            <path d="M1 5h2l4-4v12L3 9H1zM9 5c1 1 1 3 0 4M11 3c2 2 2 6 0 8" stroke="#fff" />
            <path d="M13 1c3 3 3 9 0 12" stroke="#7b868c" />
          </Svg>
        </button>
        <div className="ml-1.5 w-[58px] text-center text-[11px] leading-[18px]">
          <div>21:37</div>
          <div>31.12.2019</div>
        </div>
        <button aria-label="Info-Center" className="relative mr-3 ml-4">
          <Svg w={24} h={24}>
            <path d="M0 0h16v13H7l-3 3v-3H0z" fill="#fff" />
            <path d="M3 3.500h10M3 6.500h10M3 9.500h7" stroke="#1b2b34" />
            <circle cx="15.500" cy="15.500" r="7.500" fill="#2c3a42" stroke="#7e888e" />
            <text x="15.500" y="19.500" fontSize="11" textAnchor="middle" fill="#fff">1</text>
          </Svg>
        </button>
        <span className="mr-1 h-full w-px bg-[#5c6970]" />
      </div>
    </footer>
  )
}

export default function App() {
  return (
    <div className="flex h-screen flex-col overflow-hidden bg-[#262626] font-['Open_Sans','Noto_Sans',sans-serif] text-[11px] leading-4 text-white">
      <TitleBar />
      <Ribbon />
      <FormulaBar />
      <Sheet />
      <SheetTabs />
      <StatusBar />
      <Taskbar />
    </div>
  )
}
